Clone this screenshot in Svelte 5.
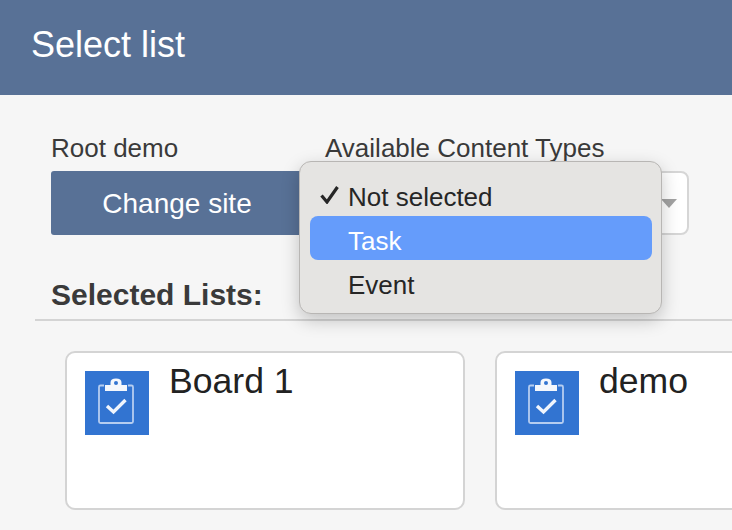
<script>
  let lists = [{ id: 1, title: "Board 1" }, { id: 2, title: "demo" }];
  let options = [
    { label: "Not selected", checked: true },
    { label: "Task", active: true },
    { label: "Event" }
  ];
</script>

<div class="page">
  <div class="header">Select list</div>

  <div class="body">
    <div class="controls">
      <div class="site">
        <div class="label">Root demo</div>
        <button class="change-btn">Change site</button>
      </div>
      <div class="types">
        <div class="label">Available Content Types</div>
        <div class="select">
          <span class="caret"></span>
        </div>
        <div class="menu">
          {#each options as option}
            <div class="option" class:active={option.active}>
              {#if option.checked}
                <svg class="check" viewBox="0 0 19 19" width="19" height="19">
                  <path d="M1.5 10.5 L7 17 L17.5 2" fill="none" stroke="#262626" stroke-width="3.2" />
                </svg>
              {/if}
              {option.label}
            </div>
          {/each}
        </div>
      </div>
    </div>

    <div class="section-title">Selected Lists:</div>

    <div class="cards">
      {#each lists as list (list.id)}
        <div class="card">
          <div class="icon">
            <svg viewBox="0 0 64 64" width="64" height="64">
              <path d="M19 14.5 H15.5 Q14 14.5 14 16 V50.5 Q14 52 15.5 52 H46.5 Q48 52 48 50.5 V16 Q48 14.5 46.5 14.5 H43" fill="none" stroke="#b5cdf0" stroke-width="1.8" />
              <path d="M20 20 V14 H25.5 V11.5 Q25.5 7.5 31 7.5 Q36.5 7.5 36.5 11.5 V14 H42 V20 Z M31 10 A2 2 0 1 0 31 14 A2 2 0 1 0 31 10 Z" fill="#f4f7fc" fill-rule="evenodd" />
              <path d="M22 35 L28.5 41 L40.5 29" fill="none" stroke="#f0f5fc" stroke-width="3.4" />
            </svg>
          </div>
          <div class="card-title">{list.title}</div>
        </div>
      {/each}
    </div>
  </div>
</div>

<style>
  :global(body) {
    margin: 0;
    background: #f6f6f6;
    overflow: hidden;
  }

  .page {
    width: 732px;
    height: 530px;
    overflow: hidden;
    font-family: "Liberation Sans", Arial, sans-serif;
    color: #3a3a3a;
  }

  .header {
    height: 95px;
    box-sizing: border-box;
    padding: 24px 31px 0;
    background-color: #587196;
    color: white;
    font-size: 36px;
    line-height: 42px;
  }

  .body {
    padding: 37px 0 0 35px;
  }

  .controls {
    display: flex;
    padding-left: 16px;
  }

  .label {
    font-size: 26px;
    line-height: 33px;
    margin-bottom: 6px;
    white-space: nowrap;
  }

  .site {
    width: 274px;
  }

  .change-btn {
    display: block;
    width: 252px;
    height: 64px;
    padding: 2px 0 0;
    border: none;
    border-radius: 3px;
    background-color: #587196;
    color: white;
    font-family: inherit;
    font-size: 28px;
  }

  .types {
    position: relative;
    width: 364px;
  }

  .select {
    display: flex;
    align-items: center;
    justify-content: flex-end;
    box-sizing: border-box;
    height: 64px;
    padding-right: 10px;
    border: 2px solid #d6d6d6;
    border-radius: 8px;
    background: white;
  }

  .caret {
    border-left: 8px solid transparent;
    border-right: 8px solid transparent;
    border-top: 9px solid #a3a3a3;
  }

  .menu {
    position: absolute;
    left: -26px;
    top: 29px;
    width: 363px;
    height: 153px;
    box-sizing: border-box;
    padding: 10px 9px 10px 10px;
    border: 1px solid #b8b6b4;
    border-radius: 12px;
    background: #e5e4e2;
    box-shadow: 0 6px 18px rgba(0, 0, 0, 0.22);
    color: #262626;
    font-size: 26px;
  }

  .option {
    position: relative;
    height: 44px;
    line-height: 50px;
    padding-left: 38px;
    border-radius: 8px;
  }

  .option.active {
    background-color: #659cfb;
    color: white;
  }

  .check {
    position: absolute;
    left: 10px;
    top: 13px;
  }

  .section-title {
    margin-top: 43px;
    padding: 0 0 7px 16px;
    height: 34px;
    line-height: 34px;
    border-bottom: 2px solid #d4d4d4;
    font-size: 30px;
    font-weight: bold;
  }

  .cards {
    display: flex;
    gap: 30px;
    margin-top: 30px;
    padding-left: 30px;
  }

  .card {
    flex: none;
    display: flex;
    align-items: flex-start;
    gap: 20px;
    width: 400px;
    height: 159px;
    box-sizing: border-box;
    padding: 18px;
    border: 2px solid #d4d4d4;
    border-radius: 10px;
    background: white;
  }

  .icon {
    flex: none;
    width: 64px;
    height: 64px;
    background-color: #3274d1;
  }

  .icon svg {
    display: block;
  }

  .card-title {
    margin-top: -12px;
    color: #222;
    font-size: 35.6px;
    line-height: 44px;
  }
</style>
